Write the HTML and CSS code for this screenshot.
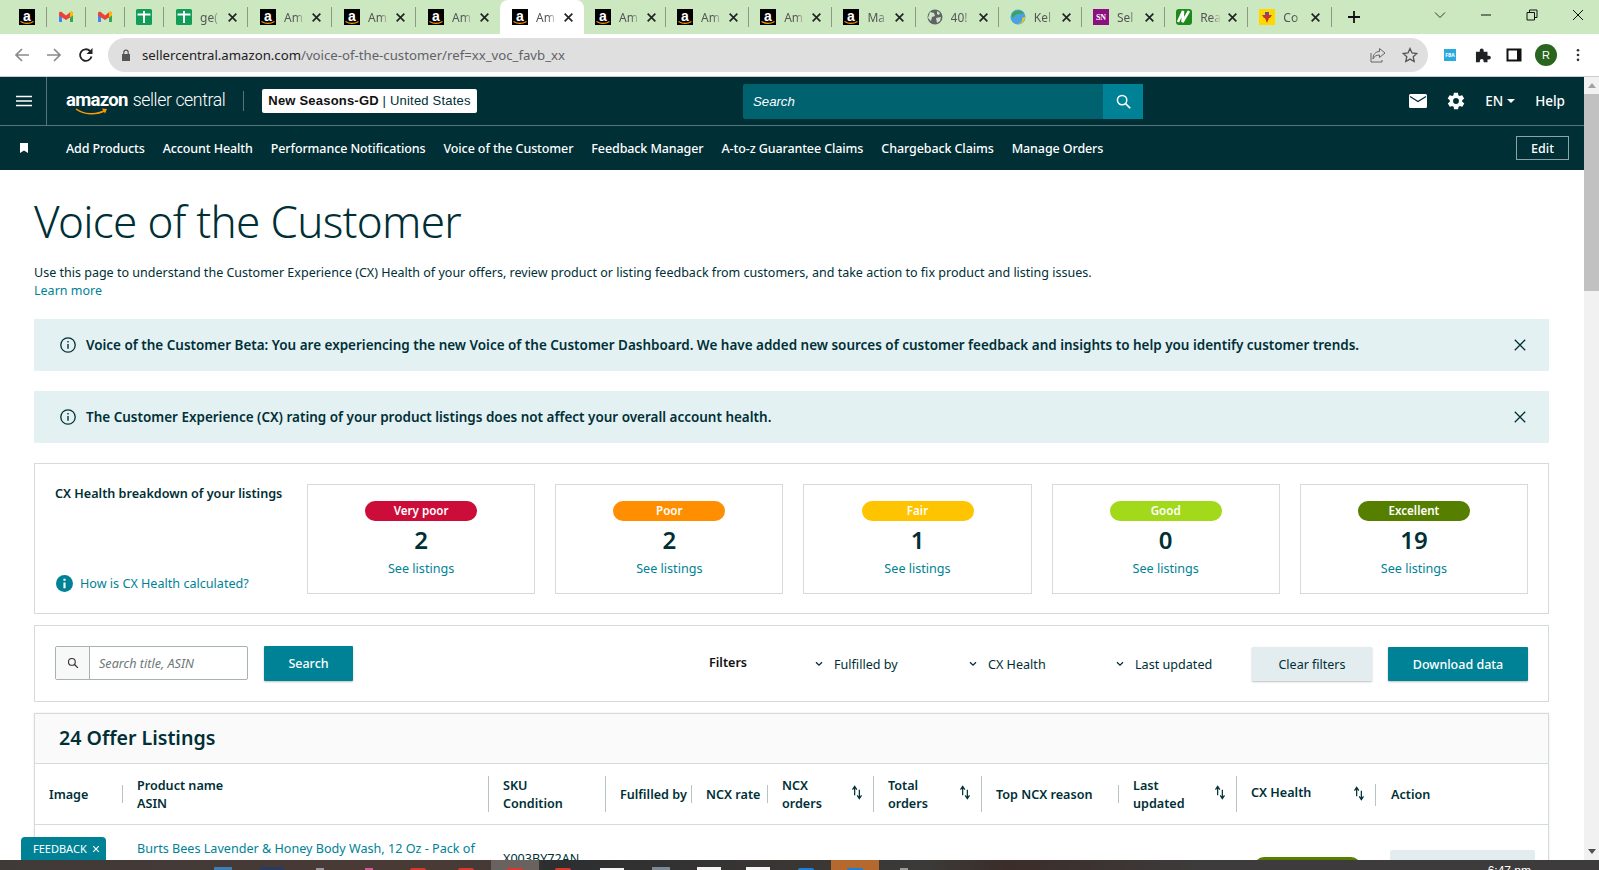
FILE: index.html
```html
<!DOCTYPE html>
<html lang="en">
<head>
    <meta charset="UTF-8">
    <title>Voice of the Customer</title>
    <link rel="stylesheet" href="styles.css">
</head>
<body>

    <svg class="defs">
        <symbol id="fav-amazon" viewBox="0 0 16 16">
            <rect width="16" height="16" fill="#000"/>
            <text x="8" y="11.5" text-anchor="middle" font-family="Liberation Sans" font-weight="700" font-size="14" fill="#fff">a</text>
            <path d="M1.5 12.5c4 2.4 9 2.4 13 0" fill="none" stroke="#f90" stroke-width="1.3"/>
        </symbol>
        <symbol id="fav-gmail" viewBox="0 0 16 16">
            <path d="M1 3.5v9.5h3V7z" fill="#4285f4"/>
            <path d="M15 3.5v9.5h-3V7z" fill="#34a853"/>
            <path d="M1 3.5l2-1 5 4 5-4 2 1v3l-7 4.5-7-4.5z" fill="#ea4335"/>
            <path d="M12 3l1-.5 2 1v3l-3 2z" fill="#fbbc04"/>
        </symbol>
        <symbol id="fav-green" viewBox="0 0 16 16">
            <rect width="16" height="16" rx="1.5" fill="#0f9d58"/>
            <path d="M1.500 4.500h13v2h-13zM7 2h2v12H7z" fill="#fff"/>
        </symbol>
        <symbol id="close" viewBox="0 0 10 10">
            <path d="M1.500 1.500l7 7M8.500 1.500l-7 7" fill="none" stroke="currentColor" stroke-width="1.500"/>
        </symbol>
        <symbol id="close-thin" viewBox="0 0 12 12">
            <path d="M.8.8l10.400 10.400M11.200.8L.8 11.200" fill="none" stroke="currentColor" stroke-width="1.300"/>
        </symbol>
        <symbol id="info" viewBox="0 0 16 16">
            <circle cx="8" cy="8" r="7.200" fill="none" stroke="#002f36" stroke-width="1.300"/>
            <path d="M7.300 7h1.400v4.800H7.300zM7.300 4h1.400v1.500H7.300z" fill="#002f36"/>
        </symbol>
        <symbol id="sort" viewBox="0 0 12 16">
            <path d="M3.500 11V2M1.200 5l2.300-3.500L5.800 5M8.500 5v9.500M6.200 11l2.300 3.500 2.300-3.500" fill="none" stroke="#002f36" stroke-width="1.300"/>
        </symbol>
        <symbol id="chev" viewBox="0 0 8 6">
            <path d="M1 1.200l3 3 3-3" fill="none" stroke="#002f36" stroke-width="1.300"/>
        </symbol>
    </svg>

    <!-- Browser tabs -->
    <div class="tabstrip">
        <div class="tab tab-small"><svg class="fav"><use href="#fav-amazon"/></svg></div>
        <div class="tab tab-small"><svg class="fav"><use href="#fav-gmail"/></svg></div>
        <div class="tab tab-small"><svg class="fav"><use href="#fav-gmail"/></svg></div>
        <div class="tab tab-small"><svg class="fav"><use href="#fav-green"/></svg></div>
        <div class="tab tab-early"><svg class="fav"><use href="#fav-green"/></svg><span class="tab-title">ge(</span><svg class="tab-x"><use href="#close"/></svg></div>
        <div class="tab tab-early"><svg class="fav"><use href="#fav-amazon"/></svg><span class="tab-title">Am</span><svg class="tab-x"><use href="#close"/></svg></div>
        <div class="tab tab-early"><svg class="fav"><use href="#fav-amazon"/></svg><span class="tab-title">Am</span><svg class="tab-x"><use href="#close"/></svg></div>
        <div class="tab tab-early tab-beforeactive"><svg class="fav"><use href="#fav-amazon"/></svg><span class="tab-title">Am</span><svg class="tab-x"><use href="#close"/></svg></div>
        <div class="tab tab-active"><svg class="fav"><use href="#fav-amazon"/></svg><span class="tab-title">Am</span><svg class="tab-x"><use href="#close"/></svg></div>
        <div class="tab tab-afteractive"><svg class="fav"><use href="#fav-amazon"/></svg><span class="tab-title">Am</span><svg class="tab-x"><use href="#close"/></svg></div>
        <div class="tab"><svg class="fav"><use href="#fav-amazon"/></svg><span class="tab-title">Am</span><svg class="tab-x"><use href="#close"/></svg></div>
        <div class="tab"><svg class="fav"><use href="#fav-amazon"/></svg><span class="tab-title">Am</span><svg class="tab-x"><use href="#close"/></svg></div>
        <div class="tab"><svg class="fav"><use href="#fav-amazon"/></svg><span class="tab-title">Ma</span><svg class="tab-x"><use href="#close"/></svg></div>
        <div class="tab">
            <svg class="fav" viewBox="0 0 16 16"><circle cx="8" cy="8" r="7.500" fill="#5f6368"/><path d="M3 3l4 1 1 3-3 1-1 4-3-3zM10 2l3 2-1 2-2-1zM9 9l5-1-1 4-3 2z" fill="#cce8c0"/></svg>
            <span class="tab-title">40!</span><svg class="tab-x"><use href="#close"/></svg>
        </div>
        <div class="tab">
            <svg class="fav" viewBox="0 0 16 16"><circle cx="8" cy="8" r="7.500" fill="#4aa3df"/><path d="M2 5c3-4 9-4 12-1l-3 1C8 4 5 6 2 9z" fill="#3da35a"/><path d="M15 8c0 4-3 7-7 7 3-1 5-3 4-6z" fill="#f5c518"/></svg>
            <span class="tab-title">Kel</span><svg class="tab-x"><use href="#close"/></svg>
        </div>
        <div class="tab">
            <svg class="fav" viewBox="0 0 16 16"><rect width="16" height="16" fill="#8e0f7f"/><text x="8" y="11" text-anchor="middle" font-family="Liberation Serif" font-weight="700" font-size="8" fill="#fff">SN</text></svg>
            <span class="tab-title">Sel</span><svg class="tab-x"><use href="#close"/></svg>
        </div>
        <div class="tab">
            <svg class="fav" viewBox="0 0 16 16"><rect width="16" height="16" rx="3" fill="#1e8a1e"/><path d="M2 13L7 2 6.500 13 13 2" fill="none" stroke="#fff" stroke-width="2.500"/></svg>
            <span class="tab-title">Rea</span><svg class="tab-x"><use href="#close"/></svg>
        </div>
        <div class="tab">
            <svg class="fav" viewBox="0 0 16 16"><rect width="16" height="16" fill="#ffd800"/><path d="M3 6h10l-2 3H5zM6 9h4l-2 5z" fill="#c0392b"/><path d="M6 3h4v3H6z" fill="#6a4a9c"/></svg>
            <span class="tab-title">Co</span><svg class="tab-x"><use href="#close"/></svg>
        </div>
        <svg class="newtab" viewBox="0 0 12 12"><path d="M6 0v12M0 6h12" stroke="#111" stroke-width="1.800"/></svg>
        <div class="winctl">
            <svg class="win-ic win-chev" viewBox="0 0 12 12"><path d="M1 3.500l5 5 5-5" fill="none" stroke="#333" stroke-width="1"/></svg>
            <svg class="win-ic win-min" viewBox="0 0 12 12"><path d="M1 6h10" stroke="#111" stroke-width="1"/></svg>
            <svg class="win-ic win-max" viewBox="0 0 12 12"><path d="M1 3.500h7.500V11H1zM3.500 3.500V1H11v7.500H8.500" fill="none" stroke="#111" stroke-width="1"/></svg>
            <svg class="win-ic win-close" viewBox="0 0 12 12"><path d="M1 1l10 10M11 1L1 11" stroke="#111" stroke-width="1"/></svg>
        </div>
    </div>

    <!-- Browser toolbar -->
    <div class="toolbar">
        <svg class="nav-ic nav-back" viewBox="0 0 16 16"><path d="M15 8H2M8 2L2 8l6 6" fill="none" stroke="#8a8a8a" stroke-width="1.700"/></svg>
        <svg class="nav-ic nav-fwd" viewBox="0 0 16 16"><path d="M1 8h13M8 2l6 6-6 6" fill="none" stroke="#8a8a8a" stroke-width="1.700"/></svg>
        <svg class="nav-ic nav-reload" viewBox="0 0 16 16"><path d="M13.500 9.500A5.800 5.800 0 1 1 12 4" fill="none" stroke="#222" stroke-width="1.800"/><path d="M14.500 1v6h-6z" fill="#222"/></svg>
        <div class="omnibox">
            <svg class="lock" viewBox="0 0 10 12"><path d="M1 5h8v7H1z" fill="#555"/><path d="M2.800 5V3.300a2.200 2.200 0 0 1 4.400 0V5" fill="none" stroke="#555" stroke-width="1.200"/></svg>
            <span class="url"><span class="url-host">sellercentral.amazon.com</span>/voice-of-the-customer/ref=xx_voc_favb_xx</span>
            <svg class="omni-ic omni-share" viewBox="0 0 16 16"><path d="M9.500 1.500L15 6l-5.500 4.500V8C6 8 4 9.500 3 12c0-4.500 2.500-7.500 6.500-7.500z" fill="none" stroke="#666" stroke-width="1"/><path d="M1 6v9h11v-2" fill="none" stroke="#666" stroke-width="1"/></svg>
            <svg class="omni-ic omni-star" viewBox="0 0 16 16"><path d="M8 1.500l2 4.500 4.800.5-3.600 3.200 1 4.800L8 12.100l-4.200 2.400 1-4.800L1.200 6.500 6 6z" fill="none" stroke="#555" stroke-width="1.300"/></svg>
        </div>
        <div class="ext-fba">FBA</div>
        <svg class="ext-ic ext-puzzle" viewBox="0 0 16 16"><path d="M1 5h4V3.500a2 2 0 0 1 4 0V5h4v4h1.500a2 2 0 0 1 0 4H13v3H9v-1.500a2 2 0 0 0-4 0V16H1z" fill="#202124" transform="scale(.96)"/></svg>
        <svg class="ext-ic ext-panel" viewBox="0 0 16 16"><path d="M1.500 2.500h13v11h-13z" fill="none" stroke="#111" stroke-width="2"/><path d="M11 3h3.500v10H11z" fill="#111"/></svg>
        <div class="avatar">R</div>
        <svg class="ext-dots" viewBox="0 0 4 16"><circle cx="2" cy="2.500" r="1.500" fill="#333"/><circle cx="2" cy="8" r="1.500" fill="#333"/><circle cx="2" cy="13.500" r="1.500" fill="#333"/></svg>
    </div>

    <div class="page">
        <div class="page-scroll">

            <!-- Seller Central header -->
            <div class="top-header">
                <div class="burger-cell">
                    <svg class="burger" viewBox="0 0 16 12"><path d="M0 1.500h16M0 6h16M0 10.500h16" stroke="#fff" stroke-width="1.700"/></svg>
                </div>
                <div class="logo">
                    <span class="logo-amazon">amazon</span><span class="logo-seller">seller central</span>
                    <svg class="logo-smile" viewBox="0 0 33 7"><path d="M1 1c8 6 21 6 29 1.500" fill="none" stroke="#f90" stroke-width="1.500"/><path d="M27 .5l5 .5-2 4.500z" fill="#f90"/></svg>
                </div>
                <div class="logo-sep"></div>
                <div class="account"><b>New Seasons-GD</b> | United States</div>
                <div class="site-search">
                    <span class="site-search-text">Search</span>
                    <div class="site-search-btn">
                        <svg viewBox="0 0 16 16"><circle cx="6.500" cy="6.500" r="5" fill="none" stroke="#fff" stroke-width="1.600"/><path d="M10.200 10.200l5 5" stroke="#fff" stroke-width="1.800"/></svg>
                    </div>
                </div>
                <div class="top-right">
                    <svg class="mail-ic" viewBox="0 0 18 14"><rect width="18" height="14" rx="1.500" fill="#fff"/><path d="M1 2.500l8 5 8-5" fill="none" stroke="#002f36" stroke-width="1.300"/></svg>
                    <svg class="gear-ic" viewBox="0 0 24 24"><path fill="#fff" d="M19.400 13c.1-.3.100-.7.100-1s0-.7-.1-1l2.100-1.600c.2-.2.200-.4.100-.6l-2-3.500c-.1-.2-.4-.3-.6-.2l-2.500 1c-.5-.4-1.100-.7-1.700-1l-.4-2.600c0-.3-.2-.5-.5-.5h-4c-.3 0-.5.200-.5.500l-.4 2.600c-.6.300-1.200.6-1.700 1l-2.500-1c-.2-.1-.5 0-.6.200l-2 3.500c-.1.200-.1.400.1.600L4.600 11c-.1.300-.1.700-.1 1s0 .7.100 1l-2.100 1.600c-.2.200-.2.400-.1.600l2 3.500c.1.200.4.300.6.200l2.500-1c.5.400 1.100.7 1.700 1l.4 2.600c0 .3.200.5.500.5h4c.3 0 .5-.2.500-.5l.4-2.600c.6-.3 1.200-.6 1.700-1l2.500 1c.2.100.5 0 .6-.2l2-3.500c.1-.2.100-.4-.1-.6zM12 15.500a3.500 3.500 0 1 1 0-7 3.500 3.500 0 0 1 0 7z"/></svg>
                    <span class="lang">EN</span>
                    <span class="caret"></span>
                    <span class="help">Help</span>
                </div>
            </div>

            <!-- Bookmarks nav -->
            <div class="bookmark-nav">
                <svg class="bookmark-ic" viewBox="0 0 8 10"><path d="M0 0h8v10L4 7.500 0 10z" fill="#fff"/></svg>
                <a class="nav-link">Add Products</a>
                <a class="nav-link">Account Health</a>
                <a class="nav-link">Performance Notifications</a>
                <a class="nav-link">Voice of the Customer</a>
                <a class="nav-link">Feedback Manager</a>
                <a class="nav-link">A-to-z Guarantee Claims</a>
                <a class="nav-link">Chargeback Claims</a>
                <a class="nav-link">Manage Orders</a>
                <button class="edit-btn">Edit</button>
            </div>

            <!-- Page content -->
            <div class="content">
                <h1>Voice of the Customer</h1>
                <p class="intro">Use this page to understand the Customer Experience (CX) Health of your offers, review product or listing feedback from customers, and take action to fix product and listing issues.<br><a class="link">Learn more</a></p>

                <div class="notice">
                    <svg class="notice-ic"><use href="#info"/></svg>
                    <span class="notice-text">Voice of the Customer Beta: You are experiencing the new Voice of the Customer Dashboard. We have added new sources of customer feedback and insights to help you identify customer trends.</span>
                    <svg class="notice-x"><use href="#close-thin"/></svg>
                </div>
                <div class="notice">
                    <svg class="notice-ic"><use href="#info"/></svg>
                    <span class="notice-text">The Customer Experience (CX) rating of your product listings does not affect your overall account health.</span>
                    <svg class="notice-x"><use href="#close-thin"/></svg>
                </div>

                <div class="panel health-panel">
                    <div class="health-intro">
                        <div class="health-title">CX Health breakdown of your listings</div>
                        <div class="health-how">
                            <svg class="how-ic" viewBox="0 0 16 16"><circle cx="8" cy="8" r="8" fill="#008296"/><path d="M7 7h2v5.500H7zM7 3.500h2v2H7z" fill="#fff"/></svg>
                            <a class="link">How is CX Health calculated?</a>
                        </div>
                    </div>
                    <div class="health-cards">
                        <div class="health-card"><span class="pill pill-verypoor">Very poor</span><span class="count">2</span><a class="link">See listings</a></div>
                        <div class="health-card"><span class="pill pill-poor">Poor</span><span class="count">2</span><a class="link">See listings</a></div>
                        <div class="health-card"><span class="pill pill-fair">Fair</span><span class="count">1</span><a class="link">See listings</a></div>
                        <div class="health-card"><span class="pill pill-good">Good</span><span class="count">0</span><a class="link">See listings</a></div>
                        <div class="health-card"><span class="pill pill-excellent">Excellent</span><span class="count">19</span><a class="link">See listings</a></div>
                    </div>
                </div>

                <div class="panel filter-panel">
                    <div class="search-box">
                        <div class="search-box-ic"><svg viewBox="0 0 16 16"><circle cx="6.500" cy="6.500" r="4.500" fill="none" stroke="#333" stroke-width="1.500"/><path d="M10 10l4.500 4.500" stroke="#333" stroke-width="1.700"/></svg></div>
                        <span class="search-box-text">Search title, ASIN</span>
                    </div>
                    <button class="btn btn-primary btn-search">Search</button>
                    <span class="filters-label">Filters</span>
                    <div class="filter filter-fulfilled"><svg class="chev"><use href="#chev"/></svg>Fulfilled by</div>
                    <div class="filter filter-health"><svg class="chev"><use href="#chev"/></svg>CX Health</div>
                    <div class="filter filter-updated"><svg class="chev"><use href="#chev"/></svg>Last updated</div>
                    <button class="btn btn-clear">Clear filters</button>
                    <button class="btn btn-primary btn-download">Download data</button>
                </div>

                <div class="listings">
                    <div class="listings-head">24 Offer Listings</div>
                    <div class="table-row table-header">
                        <div class="th th-short">Image</div>
                        <div class="th">Product name<br>ASIN</div>
                        <div class="th">SKU<br>Condition</div>
                        <div class="th th-short">Fulfilled by</div>
                        <div class="th th-short">NCX rate</div>
                        <div class="th th-sort">NCX<br>orders<svg class="sort"><use href="#sort"/></svg></div>
                        <div class="th th-sort">Total<br>orders<svg class="sort"><use href="#sort"/></svg></div>
                        <div class="th th-short">Top NCX reason</div>
                        <div class="th th-sort">Last<br>updated<svg class="sort"><use href="#sort"/></svg></div>
                        <div class="th th-sort th-health"><span class="th-health-text">CX Health</span><svg class="sort"><use href="#sort"/></svg></div>
                        <div class="th th-short th-last">Action</div>
                    </div>
                    <div class="table-row table-body">
                        <div></div>
                        <div class="td"><a class="link">Burts Bees Lavender &amp; Honey Body Wash, 12 Oz - Pack of</a></div>
                        <div class="td td-sku">X003BY72AN</div>
                        <div></div><div></div><div></div><div></div><div></div><div></div>
                        <div class="td-pill"><span class="row-pill"></span></div>
                        <div class="td-action"><span class="row-action"></span></div>
                    </div>
                </div>
            </div>
        </div>

        <!-- Scrollbar -->
        <div class="scrollbar">
            <span class="scroll-up"></span>
            <div class="scroll-thumb"></div>
            <span class="scroll-down"></span>
        </div>

        <div class="feedback">FEEDBACK <svg class="feedback-x"><use href="#close"/></svg></div>
    </div>

    <!-- Windows taskbar, nearly cut off -->
    <div class="taskbar">
        <div class="task-tile"><span class="peek peek-blue"></span></div>
        <div class="task-tile"><span class="peek peek-navy"></span></div>
        <div class="task-tile"><span class="peek peek-grey peek-small"></span></div>
        <div class="task-tile"><span class="peek peek-pink peek-small"></span></div>
        <div class="task-tile"><span class="peek peek-red"></span></div>
        <div class="task-tile"><span class="peek peek-red"></span></div>
        <div class="task-tile task-active"><span class="peek peek-red"></span></div>
        <div class="task-tile"><span class="peek peek-red"></span></div>
        <div class="task-tile"><span class="peek peek-white peek-small"></span></div>
        <div class="task-tile"><span class="peek peek-slate"></span></div>
        <div class="task-tile"><span class="peek peek-white"></span></div>
        <div class="task-tile"><span class="peek peek-white"></span></div>
        <div class="task-tile"><span class="peek peek-azure"></span></div>
        <div class="task-tile task-orange"><span class="peek peek-azure"></span></div>
        <div class="task-tile"><span class="peek peek-grey peek-small"></span></div>
        <span class="task-clock">6:47 pm</span>
    </div>

</body>
</html>
```

FILE: styles.css
```css
* {
    box-sizing: border-box;
}
html, body {
    height: 100%;
    margin: 0;
    overflow: hidden;
}
body {
    display: flex;
    flex-direction: column;
    font-family: "Noto Sans", sans-serif;
    font-size: 12.600px;
    color: #002f36;
    background: #fff;
}
.defs {
    display: none;
}
a {
    text-decoration: none;
}
.link {
    color: #008296;
}

/* Browser tabs */
.tabstrip {
    display: flex;
    align-items: center;
    height: 34px;
    flex: none;
    background: #cce8c0;
    padding-left: 8px;
    position: relative;
}
.tab {
    display: flex;
    align-items: center;
    width: 83.200px;
    height: 20px;
    flex: none;
    padding-left: 11px;
    border-right: 1px solid #8a9a86;
    font-family: "Noto Sans", sans-serif;
    font-size: 12px;
    color: #555;
}
.tab-small {
    width: 39px;
    padding-left: 11px;
}
.tab-early {
    width: 84px;
    padding-left: 12px;
}
.tab-beforeactive {
    border-right: none;
}
.tab-active {
    width: 84px;
    height: 34px;
    padding-left: 12px;
    background: #fff;
    border-radius: 8px 8px 0 0;
    border-right: none;
}
.tab-afteractive {
    width: 82px;
}
.fav {
    width: 16px;
    height: 16px;
    flex: none;
}
.tab-title {
    width: 21px;
    margin-left: 8px;
    overflow: hidden;
    white-space: nowrap;
    -webkit-mask-image: linear-gradient(90deg, #000 55%, transparent 100%);
    mask-image: linear-gradient(90deg, #000 55%, transparent 100%);
}
.tab-x {
    width: 11px;
    height: 11px;
    flex: none;
    margin-left: 6px;
    color: #222;
}
.newtab {
    width: 12px;
    height: 12px;
    margin-left: 16px;
}
.winctl {
    position: absolute;
    right: 0;
    top: 0;
    height: 34px;
    display: flex;
    align-items: flex-start;
}
.win-ic {
    width: 12px;
    height: 12px;
    margin-top: 9px;
}
.win-chev {
    margin-right: 34px;
}
.win-min {
    margin-right: 34px;
}
.win-max {
    margin-right: 34px;
}
.win-close {
    margin-right: 15px;
}

/* Browser toolbar */
.toolbar {
    display: flex;
    align-items: center;
    height: 43px;
    flex: none;
    background: #fff;
    border-bottom: 1px solid #ccc;
    padding: 0 0 1px 14px;
}
.nav-ic {
    width: 16px;
    height: 16px;
    flex: none;
}
.nav-fwd {
    margin-left: 16px;
}
.nav-reload {
    margin-left: 16px;
}
.omnibox {
    display: flex;
    align-items: center;
    width: 1320px;
    height: 34px;
    flex: none;
    margin-left: 14px;
    padding: 0 10px 0 13px;
    background: #dfdfdf;
    border-radius: 17px;
}
.lock {
    width: 10px;
    height: 12px;
    flex: none;
}
.url {
    margin-left: 11px;
    font-family: "Noto Sans", sans-serif;
    font-size: 13.200px;
    color: #5f6368;
    flex: 1;
}
.url-host {
    color: #222;
}
.omni-ic {
    width: 16px;
    height: 16px;
    flex: none;
}
.omni-star {
    margin-left: 16px;
}
.ext-fba {
    width: 12px;
    height: 12px;
    margin-left: 16px;
    flex: none;
    background: #29abe2;
    color: #fff;
    font-size: 5px;
    font-weight: 700;
    line-height: 12px;
    text-align: center;
}
.ext-ic {
    width: 16px;
    height: 16px;
    flex: none;
}
.ext-puzzle {
    margin-left: 19px;
}
.ext-panel {
    margin-left: 15px;
}
.avatar {
    width: 22px;
    height: 22px;
    margin-left: 13px;
    flex: none;
    border-radius: 50%;
    background: #2a651f;
    color: #fff;
    font-family: "Liberation Sans", sans-serif;
    font-size: 11px;
    line-height: 22px;
    text-align: center;
}
.ext-dots {
    width: 4px;
    height: 14px;
    margin-left: 19px;
    flex: none;
}

/* Page viewport */
.page {
    flex: 1;
    min-height: 0;
    display: flex;
    position: relative;
}
.page-scroll {
    flex: 1;
    min-width: 0;
    overflow: hidden;
}
.scrollbar {
    width: 15px;
    flex: none;
    display: flex;
    flex-direction: column;
    align-items: center;
    background: #f1f1f1;
}
.scroll-up {
    margin-top: 6px;
    border: 4px solid transparent;
    border-top: none;
    border-bottom: 5px solid #a3a3a3;
}
.scroll-thumb {
    width: 100%;
    height: 197px;
    margin-top: 6px;
    background: #c1c1c1;
}
.scroll-down {
    margin-top: auto;
    margin-bottom: 6px;
    border: 4px solid transparent;
    border-bottom: none;
    border-top: 5px solid #505050;
}

/* Seller Central header */
.top-header {
    display: flex;
    align-items: center;
    height: 49px;
    background: #002f36;
    border-bottom: 1px solid #56757a;
    color: #fff;
    position: relative;
}
.burger-cell {
    width: 47px;
    height: 48px;
    display: flex;
    align-items: center;
    border-right: 1px solid #56757a;
    padding-left: 16px;
}
.burger {
    width: 16px;
    height: 12px;
}
.logo {
    position: relative;
    display: flex;
    align-items: baseline;
    margin-left: 19px;
    width: 159px;
    margin-top: -3px;
    white-space: nowrap;
}
.logo-amazon {
    font-family: Roboto, sans-serif;
    font-weight: 700;
    font-size: 18.500px;
    letter-spacing: -0.700px;
}
.logo-seller {
    font-family: Roboto, sans-serif;
    font-weight: 300;
    font-size: 17.700px;
    margin-left: 5px;
    letter-spacing: -0.400px;
}
.logo-smile {
    position: absolute;
    left: 9px;
    top: 19px;
    width: 33px;
    height: 7px;
}
.logo-sep {
    width: 1px;
    height: 20px;
    margin-left: 18px;
    background: #56757a;
}
.account {
    margin-left: 18px;
    width: 215px;
    height: 24px;
    background: #fff;
    border-radius: 2px;
    color: #002f36;
    font-family: "Liberation Sans", sans-serif;
    font-size: 13px;
    letter-spacing: .2px;
    line-height: 24px;
    text-align: center;
    white-space: nowrap;
}
.account b {
    color: #111;
}
.site-search {
    display: flex;
    align-items: center;
    width: 400px;
    height: 35px;
    margin-left: 266px;
    background: #00616f;
    border-radius: 2px 0 0 2px;
}
.site-search-text {
    flex: 1;
    padding-left: 10px;
    font-family: "Liberation Sans", sans-serif;
    font-style: italic;
    font-size: 13.200px;
}
.site-search-btn {
    width: 40px;
    height: 35px;
    display: flex;
    align-items: center;
    justify-content: center;
    background: #008296;
}
.site-search-btn svg {
    width: 15px;
    height: 15px;
}
.top-right {
    display: flex;
    align-items: center;
    margin-left: auto;
    padding-right: 19px;
    font-size: 13.500px;
    font-weight: 500;
}
.mail-ic {
    width: 18px;
    height: 14px;
}
.gear-ic {
    width: 20px;
    height: 20px;
    margin-left: 19px;
}
.lang {
    margin-left: 19px;
}
.caret {
    margin-left: 4px;
    border: 4px solid transparent;
    border-bottom: none;
    border-top: 4px solid #fff;
}
.help {
    margin-left: 20px;
}

/* Bookmarks nav */
.bookmark-nav {
    display: flex;
    align-items: center;
    height: 44px;
    background: #002f36;
    padding-right: 15px;
}
.bookmark-ic {
    width: 8px;
    height: 10px;
    margin: 0 38px 0 20px;
}
.nav-link {
    margin-right: 18px;
    color: #fff;
    font-size: 12.500px;
    letter-spacing: -0.100px;
    font-weight: 500;
    white-space: nowrap;
}
.edit-btn {
    margin-left: auto;
    width: 53px;
    height: 24px;
    border: 1px solid #8ea3a6;
    background: transparent;
    color: #fff;
    font-family: "Noto Sans", sans-serif;
    font-size: 12.500px;
    font-weight: 500;
    padding: 0;
}

/* Page content */
.content {
    padding: 0 35px 0 34px;
}
h1 {
    margin: 26px 0 0;
    font-size: 44px;
    letter-spacing: -0.700px;
    line-height: 50px;
    font-weight: 300;
}
.intro {
    margin: 18px 0 0;
    font-size: 12.530px;
    line-height: 18px;
}
.notice {
    display: flex;
    align-items: center;
    height: 52px;
    margin-top: 20px;
    padding: 0 23px 0 26px;
    background: #e3f1f3;
}
.intro + .notice {
    margin-top: 19px;
}
.notice-ic {
    width: 16px;
    height: 16px;
    flex: none;
}
.notice-text {
    flex: 1;
    margin-left: 10px;
    margin-top: -1px;
    font-size: 13.480px;
    font-weight: 600;
}
.notice-x {
    width: 12px;
    height: 12px;
    color: #002f36;
}
.panel {
    display: flex;
    border: 1px solid #d5dbdb;
}
.health-panel {
    height: 151px;
    margin-top: 20px;
    padding: 20px 20px 19px;
}
.health-intro {
    width: 252px;
    flex: none;
    display: flex;
    flex-direction: column;
    justify-content: space-between;
    padding-bottom: 2px;
}
.health-title {
    font-weight: 600;
    line-height: 20px;
}
.health-how {
    display: flex;
    align-items: center;
    padding-left: 1px;
}
.how-ic {
    width: 17px;
    height: 17px;
    margin-right: 7px;
}
.health-cards {
    flex: 1;
    display: flex;
    gap: 20px;
}
.health-card {
    flex: 1;
    display: flex;
    flex-direction: column;
    align-items: center;
    padding-top: 16px;
    border: 1px solid #d5dbdb;
}
.pill {
    width: 112px;
    height: 20px;
    border-radius: 10px;
    color: #fff;
    font-size: 11.600px;
    font-weight: 600;
    line-height: 20px;
    text-align: center;
}
.pill-verypoor {
    background: #cc0c39;
}
.pill-poor {
    background: #ff8f00;
}
.pill-fair {
    background: #ffc400;
}
.pill-good {
    background: #a2d91a;
}
.pill-excellent {
    background: #567f00;
}
.count {
    margin-top: 2px;
    font-size: 24px;
    font-weight: 600;
    line-height: 33px;
}
.health-card .link {
    margin-top: 4px;
    line-height: 18px;
}
.filter-panel {
    align-items: center;
    height: 77px;
    margin-top: 11px;
    padding: 0 20px;
}
.search-box {
    display: flex;
    align-items: center;
    width: 193px;
    height: 34px;
    margin-top: -1px;
    border: 1px solid #a6b2b3;
    border-radius: 2px;
}
.search-box-ic {
    width: 34px;
    height: 32px;
    display: flex;
    align-items: center;
    justify-content: center;
    background: #f8f8f8;
    border-right: 1px solid #a6b2b3;
}
.search-box-ic svg {
    width: 12px;
    height: 12px;
}
.search-box-text {
    padding-left: 9px;
    font-style: italic;
    color: #6c7778;
}
.btn {
    height: 34px;
    border: none;
    border-radius: 1px;
    font-family: "Noto Sans", sans-serif;
    font-size: 12.500px;
    font-weight: 500;
    box-shadow: 0 1px 2px rgba(0, 0, 0, 0.25);
    padding: 0;
}
.btn-primary {
    background: #008296;
    color: #fff;
}
.btn-search {
    width: 89px;
    margin-left: 16px;
    height: 35px;
}
.filters-label {
    margin-left: 356px;
    margin-top: -2px;
    width: 106px;
    font-weight: 600;
    color: #111;
}
.filter {
    display: flex;
    align-items: center;
    margin-top: 1px;
}
.filter-fulfilled {
    width: 154px;
}
.filter-health {
    width: 147px;
}
.filter-updated {
    width: 134px;
}
.chev {
    width: 8px;
    height: 6px;
    margin-right: 11px;
}
.btn-clear {
    width: 120px;
    margin-left: auto;
    margin-top: 1px;
    background: #e3ecee;
    color: #002f36;
    font-weight: 400;
}
.btn-download {
    width: 140px;
    margin-left: 16px;
    margin-top: 1px;
}

/* Listings table */
.listings {
    margin-top: 11px;
    border: 1px solid #d5dbdb;
    border-bottom: none;
    box-shadow: 0 0 2px rgba(0, 0, 0, 0.1);
}
.listings-head {
    height: 50px;
    padding-left: 24px;
    background: #fafafa;
    border-bottom: 1px solid #d5dbdb;
    font-size: 19.600px;
    font-weight: 600;
    line-height: 48px;
}
.table-row {
    display: grid;
    grid-template-columns: 88px 366px 117px 86px 76px 106px 108px 137px 118px 139px 1fr;
}
.table-header {
    height: 61px;
    align-items: center;
    border-bottom: 1px solid #d5dbdb;
}
.th {
    position: relative;
    height: 36px;
    padding: 1px 0 0 14px;
    font-size: 12.600px;
    font-weight: 600;
    line-height: 17.500px;
    border-right: 1px solid #b8c3c4;
    white-space: nowrap;
}
.th-short {
    height: 18px;
}
.th-last {
    border-right: none;
    padding-left: 15px;
}
.th-health {
    height: 22px;
    margin-top: 1px;
    padding-top: 0;
}
.sort {
    position: absolute;
    right: 10px;
    top: 9px;
    width: 12px;
    height: 15px;
}
.th-health .sort {
    top: 2px;
}
.table-body {
    height: 80px;
}
.td {
    padding: 14px 8px 0 14px;
    line-height: 20px;
    white-space: nowrap;
}
.td-sku {
    padding-top: 24px;
    color: #002f36;
}
.td-pill {
    padding: 32px 0 0 17px;
}
.row-pill {
    display: block;
    width: 107px;
    height: 20px;
    background: #567f00;
    border-radius: 10px;
}
.td-action {
    padding: 25px 0 0 14px;
}
.row-action {
    display: block;
    width: 145px;
    height: 34px;
    background: #e3ecee;
    border-radius: 2px;
}

/* Floating feedback tab */
.feedback {
    position: absolute;
    left: 21px;
    bottom: 0;
    display: flex;
    align-items: center;
    width: 85px;
    height: 23px;
    padding-left: 12px;
    background: #008296;
    border-radius: 4px 4px 0 0;
    color: #fff;
    font-size: 11px;
}
.feedback-x {
    width: 8px;
    height: 8px;
    margin-left: 5px;
}

/* Windows taskbar */
.taskbar {
    display: flex;
    height: 10px;
    flex: none;
    overflow: hidden;
    padding-left: 199px;
    background: linear-gradient(90deg, #3f3a38 0%, #4a3a35 25%, #453a36 33%, #2c2e30 34%, #3a3634 50%, #3b3a38 58%, #3b2d2a 63%, #3d3b3b 75%, #3d3b3b 100%);
}
.task-tile {
    width: 48.600px;
    flex: none;
    display: flex;
    justify-content: center;
    padding-top: 7px;
}
.task-active {
    background: #6a625f;
}
.task-orange {
    background: #b5692f;
}
.peek {
    width: 18px;
    height: 3px;
}
.peek-small {
    width: 8px;
    height: 2px;
    margin-top: 1px;
}
.peek-blue {
    background: #3a7fb5;
}
.peek-navy {
    width: 24px;
    background: #2b3a63;
}
.peek-grey {
    background: #9a9a9a;
}
.peek-pink {
    background: #d8589c;
}
.peek-red {
    width: 16px;
    height: 2px;
    margin-top: 1px;
    border-radius: 8px 8px 0 0;
    background: #d9392b;
}
.peek-white {
    width: 24px;
    background: #f4f4f4;
}
.peek-slate {
    background: #7c8a96;
}
.peek-azure {
    width: 16px;
    height: 2px;
    margin-top: 1px;
    border-radius: 8px 8px 0 0;
    background: #1e7fd8;
}
.task-clock {
    margin-left: auto;
    padding: 5px 68px 0 0;
    color: #fff;
    font-family: "Liberation Sans", sans-serif;
    font-size: 12px;
    line-height: 12px;
}
```
